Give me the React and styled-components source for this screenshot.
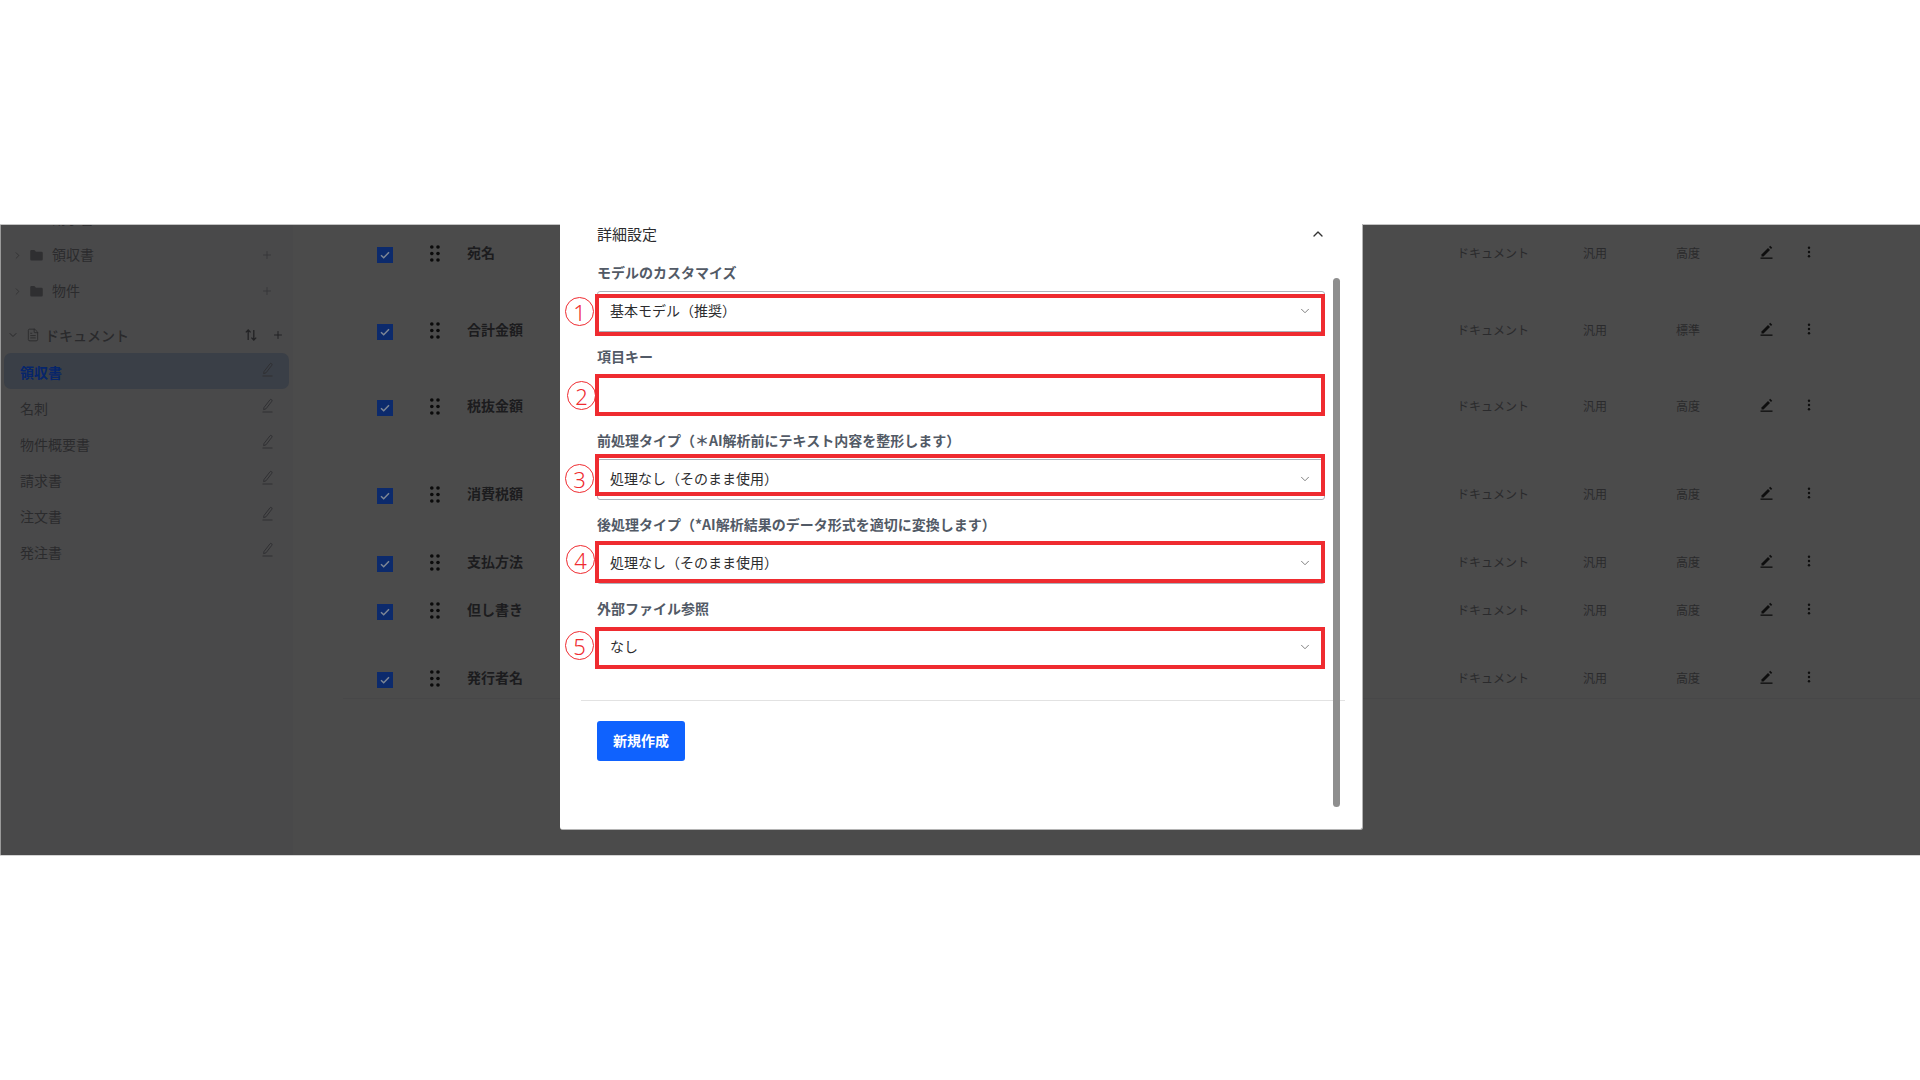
import React from "react";
import styled, { createGlobalStyle } from "styled-components";
import { ChevronRight, ChevronDown, ChevronUp, Plus, Folder, FileText } from "lucide-react";

const Global = createGlobalStyle`
  html, body { margin: 0; padding: 0; background: #fff; }
  body { font-family: "Noto Sans CJK JP", "Noto Sans", sans-serif; }
  * { box-sizing: border-box; }
`;

const Page = styled.div`
  width: 1920px;
  height: 1080px;
  padding-top: 225px;
  background: #fff;
  overflow: hidden;
`;
const Band = styled.div`
  position: relative;
  display: flex;
  height: 630px;
  background: #4b4b4b;
  border-left: 1px solid #9a9a9a;
  box-shadow: 0 -1px 0 #c4c4c4, 0 1px 0 #d4d4d4;
`;
const Sidebar = styled.aside`
  flex: 0 0 292px;
  background: #49494a;
  overflow: hidden;
`;
const SidebarScroll = styled.div`
  margin-top: -24px;
`;
const TreeRow = styled.div`
  display: flex;
  align-items: center;
  height: 36px;
  padding-left: 11px;
  color: #2b2b2d;
  font-size: 14px;
  svg { flex: none; }
`;
const TreeLabel = styled.span`
  margin-left: 8px;
  flex: 1;
  margin-top: -2px;
`;
const TreeAdd = styled.span`
  display: flex;
  margin-right: 20px;
  color: #333335;
`;
const GroupRow = styled.div`
  display: flex;
  align-items: center;
  height: 36px;
  margin-top: 8px;
  padding-left: 6px;
  color: #2a2a2c;
  font-size: 14px;
  font-weight: 500;
`;
const GroupLabel = styled.span`
  margin-left: 5px;
  flex: 1;
`;
const GroupTools = styled.span`
  display: flex;
  align-items: center;
  gap: 15px;
  margin-right: 9px;
  color: #232325;
`;
const Item = styled.div`
  display: flex;
  align-items: center;
  justify-content: space-between;
  width: 285px;
  height: 36px;
  margin-left: 3px;
  padding: 0 16px 0 16px;
  border-radius: 7px;
  font-size: 14px;
  line-height: 18px;
  font-weight: ${p => (p.$active ? 700 : 400)};
  color: ${p => (p.$active ? "#06256b" : "#2b2b2d")};
  background: ${p => (p.$active ? "#3a3f47" : "transparent")};
`;
const ItemName = styled.span`
  margin-top: 2px;
`;
const ItemPen = styled.span`
  display: flex;
  margin-top: -4px;
  color: #303033;
`;
const Main = styled.main`
  flex: 1;
  min-width: 0;
`;
const Rows = styled.div`
  margin-left: 50px;
  padding: 15px 0 7px 34px;
  border-bottom: 1px solid #474748;
`;
const Row = styled.div`
  display: grid;
  grid-template-columns: 53px 38px 989px 126px 93px 84px 47px 20px;
  align-items: center;
  height: 26px;
  margin-top: ${p => p.$gap}px;
`;
const Check = styled.span`
  display: flex;
  align-items: center;
  justify-content: center;
  width: 16px;
  height: 16px;
  margin-top: 4px;
  background: #0c2a6c;
`;
const Grip = styled.span`
  display: flex;
  color: #0b0b0b;
`;
const Name = styled.span`
  margin: -2px 0 0 -1px;
  font-size: 14px;
  font-weight: 700;
  color: #1c1c1e;
`;
const Cell = styled.span`
  font-size: 12px;
  color: #2a2a2c;
  margin-top: -2px;
`;
const Icon = styled.span`
  display: flex;
  color: #0e0e0e;
  margin-top: -2px;
`;
const Modal = styled.section`
  position: absolute;
  left: 559px;
  top: -1px;
  width: 803px;
  height: 606px;
  padding: 1px 38px 0 37px;
  background: #fff;
  border-radius: 0 0 3px 3px;
  border-right: 1px solid #b4b4b4;
  border-bottom: 1px solid #b4b4b4;
`;
const TitleRow = styled.div`
  display: flex;
  align-items: center;
  justify-content: space-between;
  height: 18px;
  margin-bottom: 19px;
  color: #2c2c2e;
  font-size: 15px;
  line-height: 18px;
  svg { color: #333; margin-right: -2px; }
`;
const Field = styled.div`
  margin-bottom: 14px;
`;
const Label = styled.label`
  display: block;
  height: 20px;
  margin-bottom: 9px;
  font-size: 14px;
  line-height: 20px;
  font-weight: 700;
  color: #525a66;
  white-space: nowrap;
`;
const Control = styled.div`
  position: relative;
  display: flex;
  align-items: center;
  justify-content: space-between;
  width: 728px;
  height: 41px;
  padding: 0 12px 3px 12px;
  border: 1px solid #aeb2ba;
  border-radius: 3px;
  background: #fff;
  font-size: 14px;
  color: #2c2c2e;
  svg { color: #6f6f6f; margin-top: 2px; }
`;
const RedBox = styled.span`
  position: absolute;
  left: -3px;
  right: -1px;
  top: ${p => p.$dy}px;
  height: 42px;
  border: 4px solid #ef2b30;
  pointer-events: none;
`;
const Badge = styled.span`
  position: absolute;
  left: ${p => p.$x}px;
  top: ${p => p.$y}px;
  display: flex;
  align-items: center;
  justify-content: center;
  width: 29px;
  height: 29px;
  border: 1px solid #ef2b30;
  border-radius: 50%;
  color: #ef2b30;
  font-family: "Noto Sans", sans-serif;
  font-size: 22px;
  font-weight: 300;
  line-height: 1;
`;
const Footer = styled.div`
  margin: 32px -21px 0 -16px;
  padding: 20px 0 0 16px;
  border-top: 1px solid #e2e2e2;
`;
const Primary = styled.button`
  display: block;
  width: 88px;
  height: 40px;
  padding: 0 0 2px;
  border: none;
  border-radius: 3px;
  background: #0f62fe;
  color: #fff;
  font-family: inherit;
  font-size: 14px;
  font-weight: 700;
`;
const Thumb = styled.div`
  position: absolute;
  left: 773px;
  top: 54px;
  width: 7px;
  height: 529px;
  border-radius: 4px;
  background: #8e8e8e;
`;

const OutlinePen = () => (
  <svg width="11" height="15" viewBox="0 0 11 15" fill="none" stroke="currentColor" strokeWidth="1">
    <path d="M2 9.5 8 1.8c.6-.6 1.4-.4 1.8.1.3.4.3 1 0 1.4L4 10.8l-2.4.8z" />
    <path d="M0.5 14h10" />
  </svg>
);
const SolidPen = () => (
  <svg width="13" height="14" viewBox="0 0 13 14" fill="currentColor">
    <path d="M1.5 9.5 8 3l2 2-6.5 6.5H1.500z" />
    <path d="M9 2l1.2-1.2 2 2L11 4z" />
    <rect x="0.500" y="12.500" width="12" height="1.300" />
  </svg>
);
const Dots = () => (
  <svg width="4" height="12" viewBox="0 0 4 12" fill="currentColor">
    <circle cx="2" cy="1.800" r="1.200" />
    <circle cx="2" cy="6" r="1.200" />
    <circle cx="2" cy="10.200" r="1.200" />
  </svg>
);
const GripIcon = () => (
  <svg width="10" height="17" viewBox="0 0 10 17" fill="currentColor">
    {[2, 8.500, 15].flatMap(y => [1.800, 8].map(x => <circle key={`${x}-${y}`} cx={x} cy={y} r="1.800" />))}
  </svg>
);
const SortIcon = () => (
  <svg width="12" height="12" viewBox="0 0 12 12" fill="none" stroke="currentColor" strokeWidth="1.300">
    <path d="M3.200 11V1M0.800 3.400 3.200 1l2.400 2.400M8.800 1v10M6.400 8.600l2.400 2.400 2.400-2.400" />
  </svg>
);
const Tick = () => (
  <svg width="10" height="8" viewBox="0 0 10 8" fill="none" stroke="#7d8695" strokeWidth="1.500">
    <path d="M1 4.200 3.700 6.800 9 1.200" />
  </svg>
);

const rows = [
  ["宛名", 0, "高度"],
  ["合計金額", 51, "標準"],
  ["税抜金額", 50, "高度"],
  ["消費税額", 62, "高度"],
  ["支払方法", 42, "高度"],
  ["但し書き", 22, "高度"],
  ["発行者名", 42, "高度"],
];
const items = ["領収書", "名刺", "物件概要書", "請求書", "注文書", "発注書"];
const fields = [
  { label: "モデルのカスタマイズ", value: "基本モデル（推奨）", dy: 2, n: "1", x: -33, y: 5 },
  { label: "項目キー", value: "", dy: -2, n: "2", x: -31, y: 5 },
  { label: "前処理タイプ（＊AI解析前にテキスト内容を整形します）", value: "処理なし（そのまま使用）", dy: -6, n: "3", x: -33, y: 4 },
  { label: "後処理タイプ（*AI解析結果のデータ形式を適切に変換します）", value: "処理なし（そのまま使用）", dy: -3, n: "4", x: -32, y: 1 },
  { label: "外部ファイル参照", value: "なし", dy: -1, n: "5", x: -33, y: 3 },
];

const Tree = ({ name }) => (
  <TreeRow>
    <ChevronRight size={11} strokeWidth={1.5} />
    <Folder size={15} fill="#2f2f31" strokeWidth={0} style={{ marginLeft: 6 }} />
    <TreeLabel>{name}</TreeLabel>
    <TreeAdd><Plus size={12} strokeWidth={1.5} /></TreeAdd>
  </TreeRow>
);

export default function App() {
  return (
    <>
      <Global />
      <Page>
        <Band>
          <Sidebar>
            <SidebarScroll>
              <Tree name="請求書" />
              <Tree name="領収書" />
              <Tree name="物件" />
              <GroupRow>
                <ChevronDown size={12} strokeWidth={2} />
                <FileText size={14} strokeWidth={1.500} style={{ marginLeft: 7 }} />
                <GroupLabel>ドキュメント</GroupLabel>
                <GroupTools>
                  <SortIcon />
                  <Plus size={12} strokeWidth={2} />
                </GroupTools>
              </GroupRow>
              {items.map((t, i) => (
                <Item key={t} $active={i === 0}>
                  <ItemName>{t}</ItemName>
                  <ItemPen><OutlinePen /></ItemPen>
                </Item>
              ))}
            </SidebarScroll>
          </Sidebar>
          <Main>
            <Rows>
              {rows.map(([name, gap, grade]) => (
                <Row key={name} $gap={gap}>
                  <Check><Tick /></Check>
                  <Grip><GripIcon /></Grip>
                  <Name>{name}</Name>
                  <Cell>ドキュメント</Cell>
                  <Cell>汎用</Cell>
                  <Cell>{grade}</Cell>
                  <Icon><SolidPen /></Icon>
                  <Icon><Dots /></Icon>
                </Row>
              ))}
            </Rows>
          </Main>
          <Modal>
            <TitleRow>
              <span>詳細設定</span>
              <ChevronUp size={16} strokeWidth={2} />
            </TitleRow>
            {fields.map(f => (
              <Field key={f.n}>
                <Label>{f.label}</Label>
                <Control>
                  {f.value}
                  {f.value && <ChevronDown size={14} strokeWidth={1.500} />}
                  <RedBox $dy={f.dy} />
                  <Badge $x={f.x} $y={f.y}>{f.n}</Badge>
                </Control>
              </Field>
            ))}
            <Footer>
              <Primary>新規作成</Primary>
            </Footer>
            <Thumb />
          </Modal>
        </Band>
      </Page>
    </>
  );
}
